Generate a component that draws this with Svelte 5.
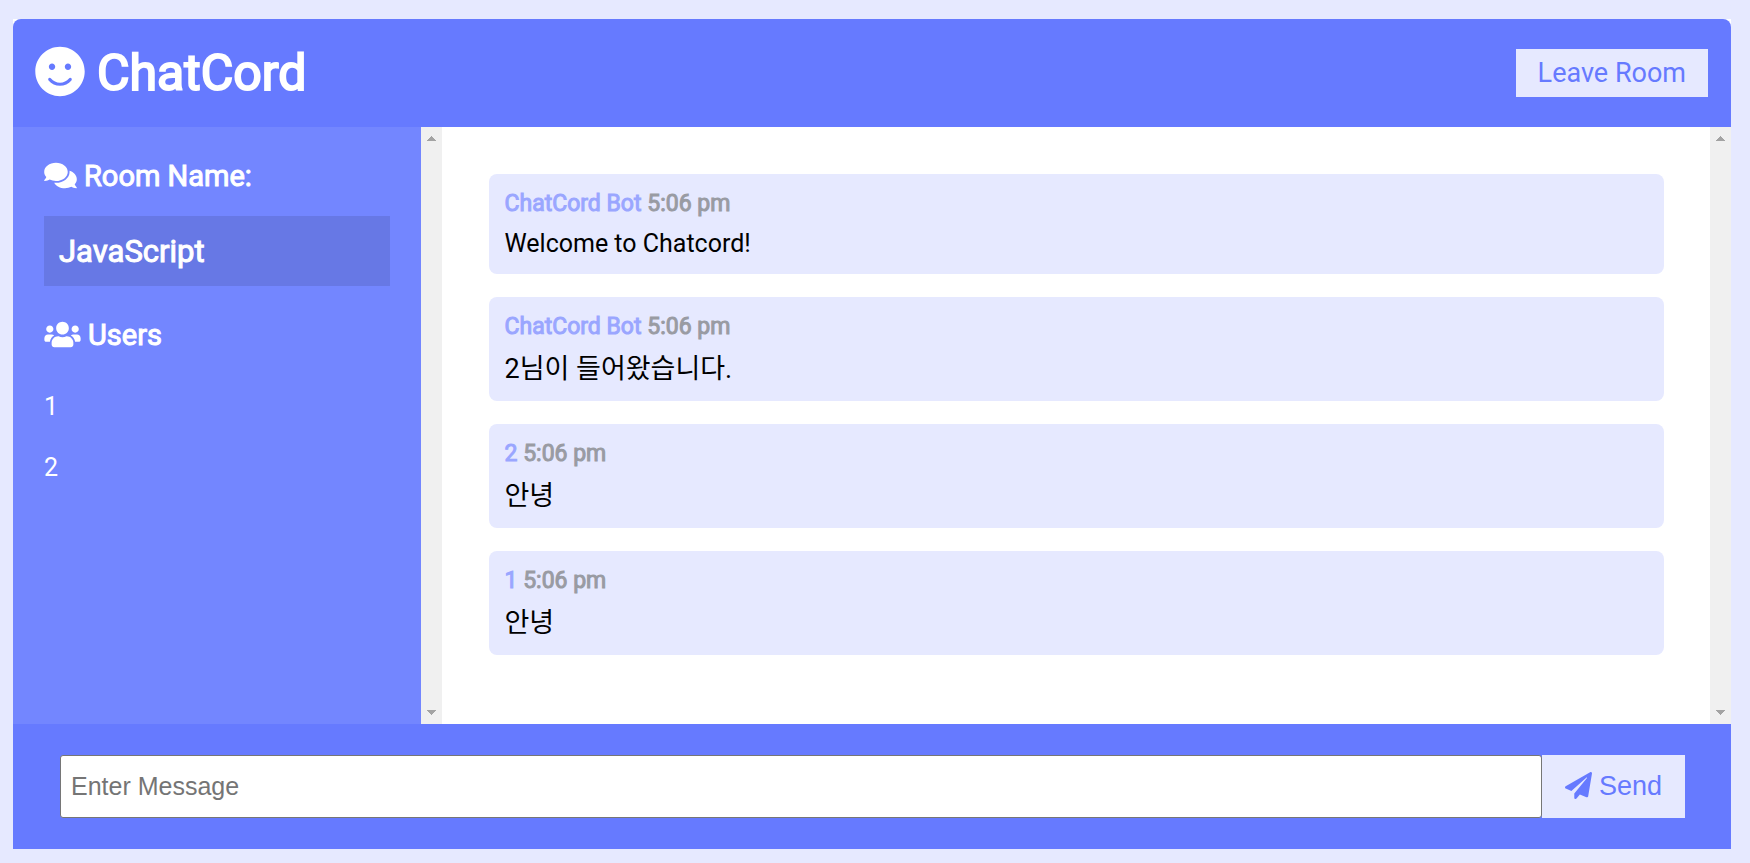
<script>
  const room = 'JavaScript';
  const users = ['1', '2'];
  const messages = [
    { user: 'ChatCord Bot', time: '5:06 pm', text: 'Welcome to Chatcord!', lang: 'en' },
    { user: 'ChatCord Bot', time: '5:06 pm', text: '2님이 들어왔습니다.', lang: 'ko' },
    { user: '2', time: '5:06 pm', text: '안녕', lang: 'ko' },
    { user: '1', time: '5:06 pm', text: '안녕', lang: 'ko' }
  ];
  let draft = $state('');
</script>

{#snippet scrollbar()}
  <div class="scrollbar" aria-hidden="true">
    <svg width="9" height="5" viewBox="0 0 9 5" shape-rendering="crispEdges"><path d="M4 0h1v1h1v1h1v1h1v1h1v1H0V4h1V3h1V2h1V1h1z" /></svg>
    <svg width="9" height="5" viewBox="0 0 9 5" shape-rendering="crispEdges"><path d="M0 0h9v1H8v1H7v1H6v1H5v1H4V4H3V3H2V2H1V1H0z" /></svg>
  </div>
{/snippet}

<div class="page">
  <div class="chat">
    <header>
      <h1>
        <svg class="smile" viewBox="0 0 496 512" aria-hidden="true"><path d="M248 8C111 8 0 119 0 256s111 248 248 248 248-111 248-248S385 8 248 8zm80 168c17.7 0 32 14.3 32 32s-14.3 32-32 32-32-14.3-32-32 14.3-32 32-32zm-160 0c17.7 0 32 14.3 32 32s-14.3 32-32 32-32-14.3-32-32 14.3-32 32-32zm194.8 170.2C334.3 380.4 292.5 400 248 400s-86.3-19.6-114.8-53.8c-13.6-16.3 11-36.7 24.6-20.5 22.4 26.9 55.2 42.2 90.2 42.2s67.8-15.4 90.2-42.2c13.4-16.2 38.1 4.2 24.6 20.5z" /></svg>
        ChatCord
      </h1>
      <a class="btn leave" href="#leave">Leave Room</a>
    </header>

    <main>
      <aside>
        <div class="side">
          <h3>
            <svg class="comments" viewBox="0 0 576 512" aria-hidden="true"><path d="M416 192c0-88.4-93.1-160-208-160S0 103.6 0 192c0 34.3 14.1 65.9 38 92-13.4 30.2-35.5 54.2-35.8 54.5-2.2 2.3-2.8 5.7-1.5 8.7S4.8 352 8 352c36.6 0 66.9-12.3 88.7-25 32.2 15.7 70.3 25 111.3 25 114.9 0 208-71.6 208-160zm122 220c23.9-26 38-57.7 38-92 0-66.9-53.5-124.2-129.3-148.1.9 6.6 1.3 13.3 1.3 20.1 0 105.9-107.7 192-240 192-10.8 0-21.3-.8-31.7-1.9C207.8 439.6 281.8 480 368 480c41 0 79.1-9.2 111.3-25 21.8 12.7 52.1 25 88.7 25 3.2 0 6.1-1.9 7.3-4.8 1.3-2.9.7-6.3-1.5-8.7-.3-.3-22.4-24.2-35.8-54.5z" /></svg>
            Room Name:
          </h3>
          <h2>{room}</h2>
          <h3>
            <svg class="people" viewBox="0 0 640 512" aria-hidden="true"><path d="M96 224c35.3 0 64-28.7 64-64s-28.7-64-64-64-64 28.7-64 64 28.7 64 64 64zm448 0c35.3 0 64-28.7 64-64s-28.7-64-64-64-64 28.7-64 64 28.7 64 64 64zm32 32h-64c-17.6 0-33.5 7.1-45.1 18.6 40.3 22.1 68.9 62 75.1 109.4h66c17.7 0 32-14.3 32-32v-32c0-35.3-28.7-64-64-64zm-256 0c61.9 0 112-50.1 112-112S381.9 32 320 32 208 82.1 208 144s50.1 112 112 112zm76.8 32h-8.3c-20.8 10-43.9 16-68.5 16s-47.6-6-68.5-16h-8.3C179.6 288 128 339.6 128 403.2V432c0 26.5 21.5 48 48 48h288c26.5 0 48-21.5 48-48v-28.8c0-63.6-51.6-115.2-115.2-115.2zm-223.7-13.4C161.5 263.1 145.6 256 128 256H64c-35.3 0-64 28.7-64 64v32c0 17.7 14.3 32 32 32h65.9c6.3-47.4 34.9-87.3 75.2-109.4z" /></svg>
            Users
          </h3>
          <ul>
            {#each users as user}
              <li>{user}</li>
            {/each}
          </ul>
        </div>
        {@render scrollbar()}
      </aside>

      <section>
        <div class="messages">
          {#each messages as message}
            <article>
              <p class="meta">{message.user} <span>{message.time}</span></p>
              <p class="text" lang={message.lang}>{message.text}</p>
            </article>
          {/each}
        </div>
        {@render scrollbar()}
      </section>
    </main>

    <form onsubmit={(e) => e.preventDefault()}>
      <input type="text" aria-label="Enter Message" placeholder="Enter Message" autocomplete="off" bind:value={draft} />
      <button class="btn send">
        <svg class="plane" viewBox="0 0 512 512" aria-hidden="true"><path d="M476 3.2L12.5 270.6c-18.1 10.4-15.8 35.6 2.2 43.2L121 358.4l287.3-253.2c5.5-4.9 13.3 2.6 8.6 8.3L176 407v80.5c0 23.6 28.5 32.9 42.5 15.8L282 426l124.6 52.2c14.2 6 30.4-2.9 33-18.2l72-432C515 7.8 493.3-6.8 476 3.2z" /></svg>
        Send
      </button>
    </form>
  </div>
</div>

<style>
  :global(body) {
    margin: 0;
    background: #e6e9ff;
  }
  .page,
  .page * {
    box-sizing: border-box;
  }
  .page {
    display: flex;
    min-height: 100vh;
    padding: 19px 19px 14px 13px;
    font-family: Roboto, 'Noto Sans CJK KR', sans-serif;
    font-size: 25px;
    color: #000;
  }
  h1,
  h2,
  h3,
  p,
  ul {
    margin: 0;
    padding: 0;
    font-weight: 400;
  }
  svg {
    flex: none;
    fill: currentColor;
    stroke: none;
  }
  .chat {
    flex: 1;
    display: flex;
    flex-direction: column;
    min-width: 0;
    background: #fff;
  }
  header {
    display: flex;
    align-items: center;
    justify-content: space-between;
    padding: 23px 23px 23px 22px;
    background: #667aff;
    color: #fff;
    border-radius: 8px 8px 0 0;
  }
  h1 {
    display: flex;
    align-items: center;
    gap: 12px;
    font-size: 50px;
    line-height: 62px;
    -webkit-text-stroke: 2px currentColor;
  }
  .smile {
    width: 50px;
    height: 51px;
    margin-bottom: 3px;
  }
  .btn {
    display: flex;
    align-items: center;
    background: #e6e9ff;
    color: #667aff;
    font-size: 27px;
    line-height: 32px;
    text-decoration: none;
    border: 0;
    border-radius: 0;
    cursor: pointer;
  }
  .leave {
    padding: 8px 22px;
  }
  main {
    flex: 1;
    display: grid;
    grid-template-columns: calc(25% - 1px) 1fr;
  }
  aside,
  section {
    display: flex;
    min-width: 0;
  }
  .side {
    flex: 1;
    padding: 31px;
    background: #7386ff;
    color: #fff;
  }
  h3 {
    display: flex;
    align-items: center;
    gap: 7px;
    margin-bottom: 22px;
    font-size: 29px;
    line-height: 36px;
    -webkit-text-stroke: 1px currentColor;
  }
  .comments {
    width: 33px;
    height: 29px;
    margin-bottom: 2px;
  }
  .people {
    width: 37px;
    height: 29px;
    margin-bottom: 2px;
  }
  h2 {
    margin-bottom: 31px;
    padding: 17px 15px 15px;
    background: rgba(0, 0, 0, 0.1);
    font-size: 31px;
    line-height: 38px;
    -webkit-text-stroke: 1px currentColor;
  }
  ul {
    list-style: none;
  }
  li {
    padding: 17px 0 15px;
    line-height: 29px;
  }
  .scrollbar {
    flex: none;
    display: flex;
    flex-direction: column;
    align-items: center;
    justify-content: space-between;
    width: 21px;
    padding: 9px 0;
    background: #f0f0f0;
    color: #a3a3a3;
  }
  .messages {
    flex: 1;
    display: flex;
    flex-direction: column;
    gap: 23px;
    min-width: 0;
    padding: 47px 46px 47px 47px;
  }
  article {
    padding: 17px 16px 15px;
    background: #e6e9ff;
    border-radius: 8px;
  }
  .meta {
    margin-bottom: 12px;
    color: #9aa6ff;
    font-size: 23px;
    line-height: 26px;
    -webkit-text-stroke: 1px currentColor;
  }
  .meta span {
    color: #999ba3;
  }
  .text {
    line-height: 30px;
  }
  .text:lang(ko) {
    font-size: 27px;
    line-height: 34px;
  }
  form {
    display: flex;
    padding: 31px 46px 31px 47px;
    background: #667aff;
  }
  input {
    flex: 1;
    min-width: 0;
    height: 63px;
    padding: 0 10px;
    border: 1px solid #767676;
    border-radius: 3px;
    background: #fff;
    font: 25px 'Liberation Sans', Arial, sans-serif;
  }
  input::placeholder {
    color: #757575;
    opacity: 1;
  }
  .send {
    gap: 7px;
    padding: 0 23px 2px;
    font-family: 'Liberation Sans', Arial, sans-serif;
  }
  .plane {
    width: 27px;
    height: 27px;
  }
</style>
